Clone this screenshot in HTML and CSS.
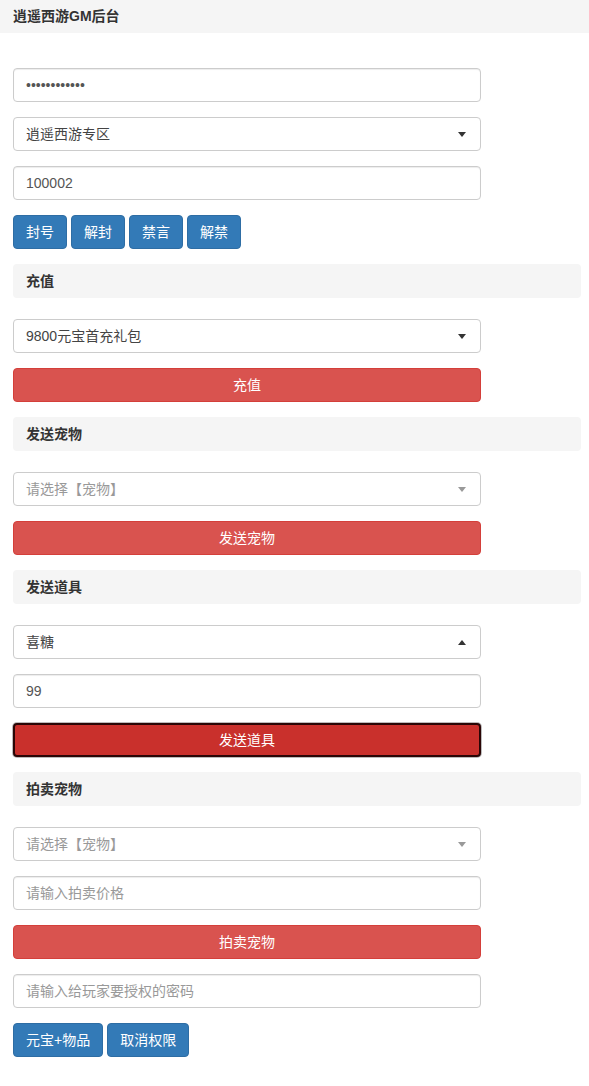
FILE: index.html
```html
<!DOCTYPE html>
<html lang="zh-CN">
<head>
<meta charset="utf-8">
<title>逍遥西游GM后台</title>
<link rel="stylesheet" href="styles.css">
</head>
<body>
<div class="topbar">逍遥西游GM后台</div>
<div class="content">
  <input class="field" type="text" value="••••••••••••">
  <div class="select"><span class="sel-text">逍遥西游专区</span><span class="arrow"></span></div>
  <input class="field" type="text" value="100002">
  <div class="btn-row">
    <button class="btn btn-primary">封号</button>
    <button class="btn btn-primary">解封</button>
    <button class="btn btn-primary">禁言</button>
    <button class="btn btn-primary">解禁</button>
  </div>

  <div class="section-head">充值</div>
  <div class="select"><span class="sel-text">9800元宝首充礼包</span><span class="arrow"></span></div>
  <button class="btn btn-danger btn-block">充值</button>

  <div class="section-head">发送宠物</div>
  <div class="select"><span class="sel-text placeholder">请选择【宠物】</span><span class="arrow light"></span></div>
  <button class="btn btn-danger btn-block">发送宠物</button>

  <div class="section-head">发送道具</div>
  <div class="select"><span class="sel-text">喜糖</span><span class="arrow up"></span></div>
  <input class="field" type="text" value="99">
  <button class="btn btn-danger btn-block focused">发送道具</button>

  <div class="section-head">拍卖宠物</div>
  <div class="select"><span class="sel-text placeholder">请选择【宠物】</span><span class="arrow light"></span></div>
  <input class="field" type="text" placeholder="请输入拍卖价格">
  <button class="btn btn-danger btn-block">拍卖宠物</button>
  <input class="field" type="text" placeholder="请输入给玩家要授权的密码">
  <div class="btn-row">
    <button class="btn btn-primary">元宝+物品</button>
    <button class="btn btn-primary">取消权限</button>
  </div>
</div>
</body>
</html>
```

FILE: styles.css
```css
* { box-sizing: border-box; }
html, body { margin: 0; padding: 0; background: #fff; }
body {
  font-family: "Liberation Sans", Arial, "Noto Sans CJK SC", sans-serif;
  font-size: 14px;
  line-height: 20px;
  color: #333;
}
.topbar {
  height: 33px;
  background: #f5f5f5;
  padding: 6px 13px 0;
  font-weight: bold;
  font-size: 14px;
  color: #333;
}
.content {
  padding: 35px 8px 20px 13px;
}
.field, .select {
  display: block;
  width: 468px;
  height: 34px;
  margin: 0 0 15px 0;
  padding: 6px 12px;
  border: 1px solid #ccc;
  border-radius: 4px;
  background: #fff;
  box-shadow: inset 0 1px 1px rgba(0,0,0,.075);
  font-family: inherit;
  font-size: 14px;
  line-height: 20px;
  color: #555;
  outline: none;
}
.field::placeholder { color: #999; }
.select {
  display: flex;
  align-items: center;
  justify-content: space-between;
  color: #444;
  box-shadow: none;
  border-color: #ccc;
  padding-right: 14px;
}
.sel-text.placeholder { color: #999; }
.arrow {
  width: 0;
  height: 0;
  border-left: 4px solid transparent;
  border-right: 4px solid transparent;
  border-top: 5px solid #333;
}
.arrow.light { border-top-color: #999; }
.arrow.up {
  border-top: 0;
  border-bottom: 5px solid #333;
}
.btn-row {
  display: flex;
  gap: 4px;
  margin-bottom: 15px;
}
.btn {
  display: inline-block;
  height: 34px;
  padding: 6px 12px;
  border: 1px solid transparent;
  border-radius: 4px;
  font-family: inherit;
  font-size: 14px;
  line-height: 20px;
  color: #fff;
  cursor: pointer;
}
.btn-primary {
  background: #337ab7;
  border-color: #2e6da4;
}
.btn-danger {
  background: #d9534f;
  border-color: #d43f3a;
}
.btn-block {
  display: block;
  width: 468px;
  margin-bottom: 15px;
  text-align: center;
}
.btn-danger.focused {
  background: #c9302c;
  border: 2px solid #2a0606;
  padding-top: 5px;
  box-shadow: 0 0 0 1px #bbb;
}
.section-head {
  height: 34px;
  margin-bottom: 21px;
  padding: 7px 13px;
  background: #f5f5f5;
  border-radius: 4px;
  font-weight: bold;
  color: #333;
}
```
